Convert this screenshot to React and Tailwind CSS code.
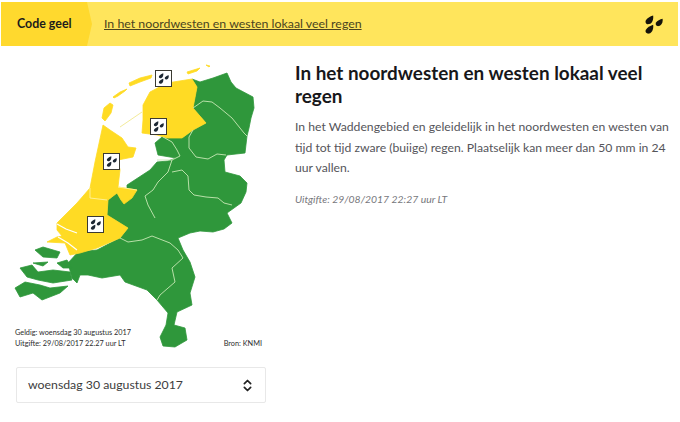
import React from "react";
import { ChevronsUpDown } from "lucide-react";

const DropPaths = () => (
  <>
    <path d="M9.6 0.4 C10.2 4 9 8.6 5.4 9.5 C2.3 10.2 0.8 7.6 2 5.4 C3.2 3.3 6.4 1.4 9.6 0.4 Z" />
    <path d="M19.6 4 C20 7.2 18.8 11 15.6 11.7 C12.8 12.2 11.6 9.8 12.7 7.9 C13.9 6 16.8 4.7 19.6 4 Z" />
    <path d="M9.6 10.3 C10.2 13.9 9 18.6 5.4 19.5 C2.3 20.2 0.8 17.6 2 15.4 C3.2 13.3 6.4 11.4 9.6 10.3 Z" />
  </>
);

const Drops = ({ className }) => (
  <svg viewBox="0 0 20 20" className={className} fill="currentColor">
    <DropPaths />
  </svg>
);

const WarningBox = ({ x, y }) => (
  <g transform={`translate(${x} ${y})`}>
    <rect x="0.5" y="0.5" width="16" height="16" fill="#fff" stroke="#3a3a32" />
    <svg x="3" y="3" width="11" height="11" viewBox="0 0 20 20" fill="#1c2733">
      <DropPaths />
    </svg>
  </g>
);

const GREEN = "#2f973b";
const YELLOW = "#ffdb24";

const NetherlandsMap = () => (
  <svg viewBox="0 55 280 295" className="w-[280px] h-[295px] block">
    {/* groen */}
    <g fill={GREEN} stroke={GREEN} strokeWidth="0.8" strokeLinejoin="round">
      <path d="M192 79 L200 82 L213 78 L227 73 L231 82 L236 88 L253 97 L254 108 L251 118 L249 128 L247 136 L245 153 L227 155 L224 160 L225 172 L240 176 L247 183 L246 192 L241 203 L227 213 L232 223 L224 229 L213 232 L200 231 L190 233 L178 238 L183 250 L190 262 L195 277 L190 293 L192 305 L177 312 L174 325 L185 328 L187 340 L175 347 L163 346 L160 337 L166 325 L168 313 L157 300 L147 290 L125 282 L120 275 L102 278 L88 275 L80 275 L77 283 L72 278 L68 263 L78 252 L97 250 L120 238 L128 228 L107 215 L108 200 L117 193 L121 200 L132 198 L127 188 L127 185 L150 170 L157 162 L168 161 L176 158 L158 155 L155 143 L162 137 L167 138 L182 138 L193 130 L206 123 L193 108 L197 87 Z" />
      {/* Zeeland */}
      <path d="M35 250 L43 247 L60 252 L57 258 L43 257 Z" />
      <path d="M33 263 L48 262 L43 266 Z" />
      <path d="M57 263 L67 260 L72 268 L63 268 Z" />
      <path d="M20 268 L32 265 L38 272 L53 270 L70 272 L72 280 L53 283 L38 280 L27 277 Z" />
      <path d="M15 288 L25 282 L40 285 L50 288 L68 286 L60 293 L42 300 L33 293 L20 297 Z" />
    </g>
    {/* geel */}
    <g fill={YELLOW} stroke={YELLOW} strokeWidth="0.8" strokeLinejoin="round">
      <path d="M143 105 L150 92 L167 83 L192 79 L197 87 L193 108 L206 123 L193 130 L182 138 L167 138 L157 135 L142 133 L143 120 Z" />
      <path d="M103 125 L110 130 L122 138 L128 147 L136 148 L133 157 L118 160 L120 170 L118 187 L137 190 L132 198 L124 204 L121 200 L117 193 L108 200 L107 215 L128 228 L120 238 L97 248 L80 253 L70 255 L65 243 L47 242 L57 237 L62 236 L57 230 L57 223 L77 203 L90 188 L95 162 Z" />
      <path d="M102 118 L104 108 L110 103 L113 105 L111 113 L105 121 Z" />
      <path d="M113 97 L120 92 L127 89 L125 91 L118 96 L114 98 Z" />
      <path d="M129 83 L140 78 L152 75 L151 78 L140 82 L130 86 Z" />
      <path d="M187 72 L200 68 L197 71 L188 74 Z" />
      <path d="M206 65 L210 66 L209 67 Z" />
    </g>
    <path fill="none" stroke="#fff" strokeWidth="1.2" d="M57 224 L66 229 L77 233" />
    <path fill="none" stroke="#fff" strokeWidth="1.2" d="M58 237 L68 243 L77 250" />
    <path fill="none" stroke="#f3eb9a" strokeWidth="1" d="M120 127 L142 112" />
    {/* provinciegrenzen */}
    <g fill="none" stroke="#c7e8b4" strokeWidth="0.9">
      <path d="M193 108 L203 101 L212 102 L220 108 L232 118 L244 133 L247 136" />
      <path d="M193 130 L189 137 L189 148 L196 157 L208 159 L217 154 L226 155" />
      <path d="M163 137 L172 142 L177 150 L180 156 L172 160 L157 160" />
      <path d="M172 160 L168 172 L158 182 L153 190 L145 196 L148 205 L155 218" />
      <path d="M172 172 L182 170 L188 176 L189 190 L194 195 L206 197 L218 198 L224 203 L232 205" />
      <path d="M120 238 L128 242 L142 240 L152 236 L170 243 L178 250 L183 258" />
      <path d="M183 258 L172 268 L175 282 L160 295 L157 300" />
    </g>
    <g fill="none" stroke="#fff3a0" strokeWidth="0.9">
      <path d="M90 188 L90 198 L107 200" />
      <path d="M118 187 L137 190" />
    </g>
    <WarningBox x={155} y={70} />
    <WarningBox x={150} y={118} />
    <WarningBox x={103} y={153} />
    <WarningBox x={87} y={216} />
  </svg>
);

export default function App() {
  return (
    <div className="w-[680px] h-[422px] bg-white pt-[2px] px-[1px] overflow-hidden font-['Lato',sans-serif]">
      <div className="h-[44px] w-[677px] bg-[#ffe55c] flex items-center relative">
        <div className="h-full w-[92px] bg-[#ffd92e] [clip-path:polygon(0_0,86px_0,91px_50%,86px_100%,0_100%)] flex items-center pl-[16px] text-[12.4px] font-bold text-[#1c1c1c]">
          Code geel
        </div>
        <a className="ml-[11px] text-[12.35px] text-[#4a4420] underline">
          In het noordwesten en westen lokaal veel regen
        </a>
        <Drops className="w-[19px] h-[19px] ml-auto mr-[15px] text-[#15130a]" />
      </div>

      <div className="flex mt-[9px]">
        <div className="w-[295px] shrink-0 -ml-[1px]">
          <div className="relative w-[280px] h-[295px]">
            <NetherlandsMap />
            <div className="absolute left-[15px] bottom-[1px] text-[7.3px] leading-[10.5px] text-[#2c2c2c]">
              <div>Geldig: woensdag 30 augustus 2017</div>
              <div>Uitgifte: 29/08/2017 22.27 uur LT</div>
            </div>
            <div className="absolute right-[18px] bottom-[1px] text-[7.3px] leading-[10.5px] text-[#2c2c2c]">Bron: KNMI</div>
          </div>
          <div className="ml-[16px] mt-[17px] w-[250px] h-[36px] border border-[#e8e8e8] rounded-[2px] flex items-center justify-between pl-[11px] pr-[10px] text-[12.3px] text-[#3d3d3d]">
            <span>woensdag 30 augustus 2017</span>
            <ChevronsUpDown className="w-[15px] h-[15px] text-[#222]" strokeWidth={2.8} />
          </div>
        </div>

        <div className="w-[378px] pt-[6px]">
          <h1 className="text-[18.9px] leading-[23px] font-bold text-[#17171a]">
            In het noordwesten en westen lokaal veel regen
          </h1>
          <p className="mt-[10px] text-[12.2px] leading-[20.5px] text-[#55555a]">
            In het Waddengebied en geleidelijk in het noordwesten en westen van tijd tot tijd zware (buiige) regen. Plaatselijk kan meer dan 50 mm in 24 uur vallen.
          </p>
          <p className="mt-[11px] text-[10.4px] leading-[18px] italic text-[#77777c]">Uitgifte: 29/08/2017 22:27 uur LT</p>
        </div>
      </div>
    </div>
  );
}
